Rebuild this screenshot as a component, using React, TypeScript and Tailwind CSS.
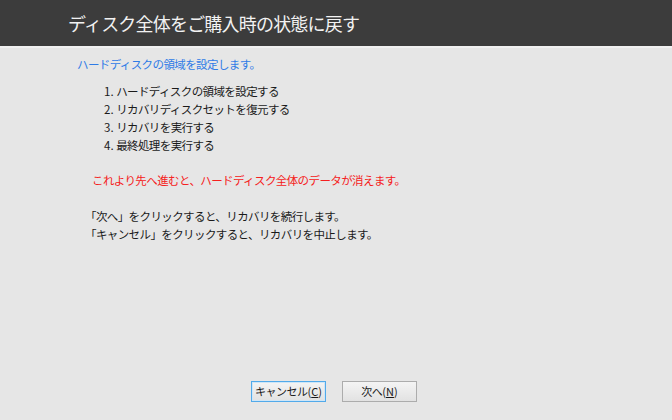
// Recovery wizard: first step of restoring the disk to factory state
import React from 'react';

const font = "font-['Meiryo_UI','Noto_Sans_CJK_JP',sans-serif]";

const steps = [
  'ハードディスクの領域を設定する',
  'リカバリディスクセットを復元する',
  'リカバリを実行する',
  '最終処理を実行する',
];

const App: React.FC = () => {
  return (
    <div className={`w-[672px] h-[420px] flex flex-col bg-[#e6e6e6] ${font}`}>
      <header className="h-[46px] shrink-0 bg-[#3c3c3c] border-b-2 border-[#f0f0f0] box-content flex items-center pl-[68px]">
        <h1 className="text-[18px] tracking-[-0.8px] text-[#f2f2f2] leading-none">ディスク全体をご購入時の状態に戻す</h1>
      </header>

      <main className="flex-1 flex flex-col text-[11.5px] tracking-[-0.6px] leading-[18px]">
        <p className="mt-[7px] ml-[77px] text-[#2f7be6]">ハードディスクの領域を設定します。</p>

        <ol className="mt-[9px] ml-[104px] text-[#1a1a1a]">
          {steps.map((s, i) => (
            <li key={s}>
              <span className="tracking-normal">{i + 1}. </span>
              {s}
            </li>
          ))}
        </ol>

        <p className="mt-[17px] ml-[92px] text-[#f52020]">これより先へ進むと、ハードディスク全体のデータが消えます。</p>

        <div className="mt-[18px] ml-[85px] text-[#1a1a1a]">
          <p>「次へ」をクリックすると、リカバリを続行します。</p>
          <p>「キャンセル」をクリックすると、リカバリを中止します。</p>
        </div>

        <div className="mt-auto mb-[18px] flex justify-center gap-[16px] -translate-x-[2px]">
          <button
            type="button"
            className="w-[75px] h-[21px] px-0 border border-[#52aaea] outline outline-1 -outline-offset-2 outline-[#cfe6f7] bg-gradient-to-b from-[#f4f4f4] to-[#e2e2e2] text-[11px] text-[#1a1a1a] tracking-[-0.5px] leading-none whitespace-nowrap"
          >
            キャンセル<span className="tracking-normal">(<span className="underline">C</span>)</span>
          </button>
          <button
            type="button"
            className="w-[75px] h-[21px] px-0 border border-[#acacac] bg-gradient-to-b from-[#f4f4f4] to-[#e2e2e2] text-[11px] text-[#1a1a1a] tracking-[-0.5px] leading-none whitespace-nowrap"
          >
            次へ<span className="tracking-normal">(<span className="underline">N</span>)</span>
          </button>
        </div>
      </main>
    </div>
  );
};

export default App;
